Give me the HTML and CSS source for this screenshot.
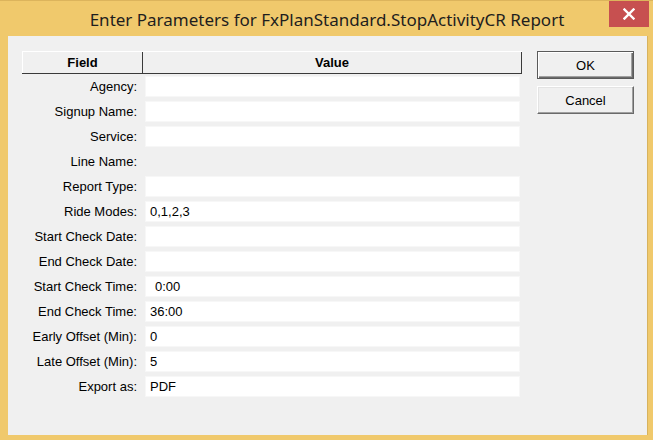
FILE: index.html
```html
<!DOCTYPE html>
<html>
<head>
<meta charset="utf-8">
<link rel="stylesheet" href="styles.css">
</head>
<body>
<div class="window">
  <div class="titlebar">
    <span class="title">Enter Parameters for FxPlanStandard.StopActivityCR Report</span>
    <div class="close"><svg width="12" height="12" viewBox="0 0 12 12"><path d="M1.5 1.5 L10.5 10.5 M10.5 1.5 L1.5 10.5" stroke="#fff" stroke-width="2.4" stroke-linecap="square"/></svg></div>
  </div>
  <div class="client">
    <div class="grid">
      <div class="header">
        <div class="hcell hfield">Field</div>
        <div class="hcell hvalue">Value</div>
      </div>
      <div class="rows">
        <div class="row"><div class="label">Agency:</div><div class="input"></div></div>
        <div class="row"><div class="label">Signup Name:</div><div class="input"></div></div>
        <div class="row"><div class="label">Service:</div><div class="input"></div></div>
        <div class="row"><div class="label">Line Name:</div></div>
        <div class="row"><div class="label">Report Type:</div><div class="input"></div></div>
        <div class="row"><div class="label">Ride Modes:</div><div class="input">0,1,2,3</div></div>
        <div class="row"><div class="label">Start Check Date:</div><div class="input"></div></div>
        <div class="row"><div class="label">End Check Date:</div><div class="input"></div></div>
        <div class="row"><div class="label">Start Check Time:</div><div class="input indent">0:00</div></div>
        <div class="row"><div class="label">End Check Time:</div><div class="input">36:00</div></div>
        <div class="row"><div class="label">Early Offset (Min):</div><div class="input">0</div></div>
        <div class="row"><div class="label">Late Offset (Min):</div><div class="input">5</div></div>
        <div class="row"><div class="label">Export as:</div><div class="input">PDF</div></div>
      </div>
    </div>
    <div class="buttons">
      <div class="btn default">OK</div>
      <div class="btn">Cancel</div>
    </div>
  </div>
</div>
</body>
</html>
```
FILE: styles.css
```css
* { box-sizing: border-box; }
html, body { margin: 0; padding: 0; }
body {
  background: #f0c96c;
  font-family: "Liberation Sans", Arial, sans-serif;
}
.window {
  width: 653px;
  height: 440px;
  background: #f0c96c;
  border-top: 1px solid #dcb45c;
  position: relative;
  display: flex;
  flex-direction: column;
}
.titlebar {
  height: 35px;
  display: flex;
  align-items: center;
  justify-content: center;
  padding-left: 1px;
}
.title {
  font-family: "Noto Sans", "Open Sans", sans-serif;
  font-size: 17px;
  color: #1e1e1e;
  margin-top: 2px;
}
.close {
  position: absolute;
  top: 0;
  right: 4px;
  width: 40px;
  height: 26px;
  background: #c75050;
  display: flex;
  align-items: center;
  justify-content: center;
}
.client {
  margin: 0 5px 5px 8px;
  flex: 1;
  background: #f0f0f0;
  border-right: 1px solid #d7b25e;
  padding: 15px 0 0 14px;
  display: flex;
  gap: 15px;
  font-size: 13px;
  color: #000;
}
.grid { width: 500px; }
.header {
  display: flex;
  height: 23px;
  border-top: 1px solid #fff;
  border-bottom: 1px solid #3a3a3a;
  font-weight: bold;
}
.hcell {
  display: flex;
  align-items: center;
  justify-content: center;
  border-right: 1px solid #3a3a3a;
  padding-bottom: 1px;
}
.hfield { width: 121px; border-left: 1px solid #fff; }
.hvalue { flex: 1; }
.rows {
  padding-top: 2px;
  display: flex;
  flex-direction: column;
}
.row {
  display: flex;
  height: 25px;
}
.label {
  width: 120px;
  padding-right: 5px;
  text-align: right;
  height: 21px;
  line-height: 21px;
  white-space: nowrap;
}
.input {
  margin-left: 3px;
  width: 375px;
  height: 21px;
  line-height: 19px;
  background: #fff;
  border: 1px solid #f7f7f7;
  padding-left: 4px;
  white-space: pre;
}
.input.indent { padding-left: 9px; }
.buttons {
  display: flex;
  flex-direction: column;
  gap: 7px;
}
.btn {
  width: 97px;
  height: 28px;
  display: flex;
  align-items: center;
  justify-content: center;
  background: #f0f0f0;
  border-top: 1px solid #fff;
  border-left: 1px solid #fff;
  border-right: 1px solid #6a6a6a;
  border-bottom: 1px solid #6a6a6a;
  box-shadow: inset -1px -1px 0 #a0a0a0, inset 1px 1px 0 #e3e3e3;
  font-size: 13px;
}
.btn.default {
  border: 1px solid #5a5a5a;
  box-shadow: inset 1px 1px 0 #fff, inset -1px -1px 0 #6a6a6a, inset -2px -2px 0 #a0a0a0;
}
```
